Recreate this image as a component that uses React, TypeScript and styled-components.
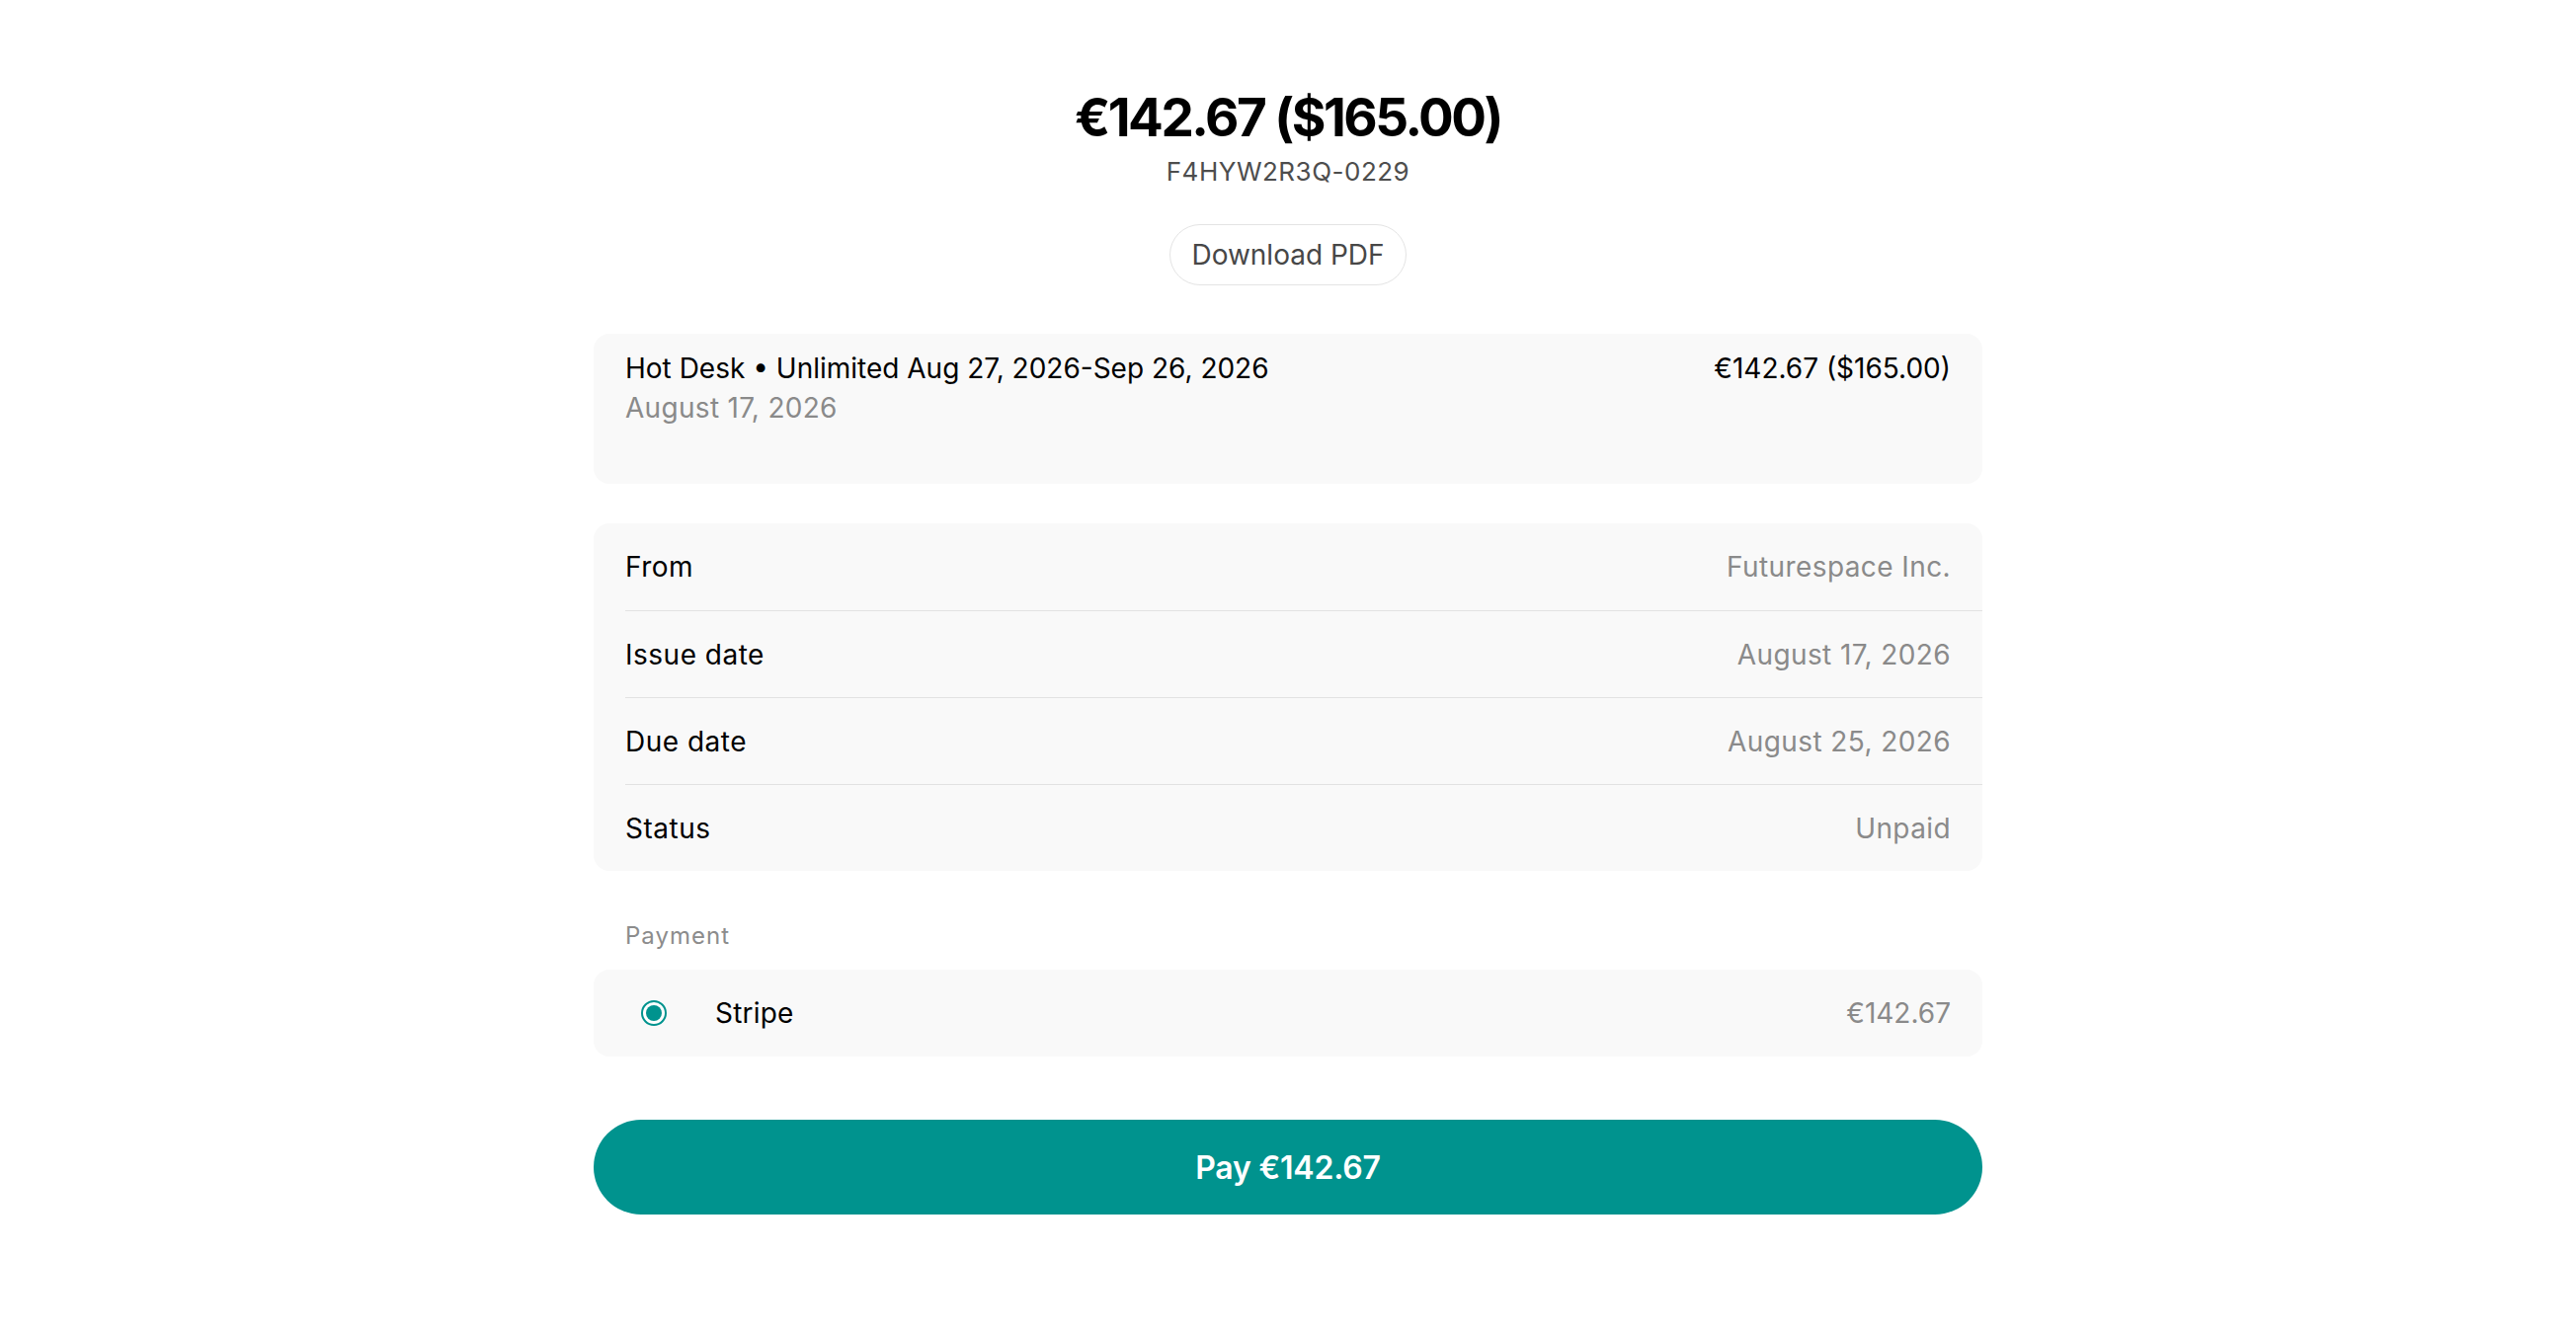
import React from "react";
import styled, { createGlobalStyle } from "styled-components";

const GlobalStyle = createGlobalStyle`
  html, body { margin: 0; padding: 0; background: #ffffff; }
  body {
    font-family: Inter, "Noto Sans", "Liberation Sans", sans-serif;
    color: #000;
    -webkit-font-smoothing: antialiased;
  }
  * { box-sizing: border-box; }
`;

const TEAL = "#00938e";

const Page = styled.main`
  width: 1406px;
  margin: 0 auto;
  padding-top: 87px;
  display: flex;
  flex-direction: column;
`;

const Header = styled.header`
  display: flex;
  flex-direction: column;
  align-items: center;
`;

const Amount = styled.h1`
  margin: 0;
  font-size: 53px;
  line-height: 64px;
  font-weight: 700;
  letter-spacing: -2.5px;
  color: #000;
`;

const InvoiceNumber = styled.div`
  margin-top: 5px;
  font-size: 26px;
  line-height: 36px;
  letter-spacing: 0.5px;
  color: #4d4d4d;
`;

const PdfButton = styled.button`
  margin-top: 35px;
  height: 62px;
  padding: 0 21px;
  border: 1px solid #e4e4e4;
  border-radius: 31px;
  background: #fff;
  font-family: inherit;
  font-size: 28px;
  color: #474747;
  display: inline-flex;
  align-items: center;
  cursor: pointer;
`;

const Card = styled.section<{ $top: number }>`
  margin-top: ${(p) => p.$top}px;
  background: #f9f9f9;
  border-radius: 16px;
`;

const LineItem = styled(Card)`
  height: 152px;
  padding: 15px 32px 0;
  display: flex;
  justify-content: space-between;
  align-items: flex-start;
`;

const ItemText = styled.div`
  display: flex;
  flex-direction: column;
`;

const Text = styled.span<{ $muted?: boolean; $spacing?: number }>`
  font-size: 28px;
  line-height: 40px;
  color: ${(p) => (p.$muted ? "#8a8a8a" : "#000")};
  letter-spacing: ${(p) => p.$spacing ?? 0}px;
  white-space: nowrap;
`;

const DetailRow = styled.div`
  height: 88px;
  margin-left: 32px;
  padding-right: 32px;
  display: flex;
  align-items: center;
  justify-content: space-between;
  & + & {
    border-top: 1px solid #e2e2e2;
  }
`;

const SectionLabel = styled.div`
  margin-top: 50px;
  padding-left: 32px;
  font-size: 24px;
  line-height: 32px;
  letter-spacing: 1px;
  color: #8c8c8c;
`;

const PaymentOption = styled(Card)`
  height: 88px;
  padding: 0 32px 0 48px;
  display: flex;
  align-items: center;
`;

const Radio = styled.span`
  width: 26px;
  height: 26px;
  border-radius: 50%;
  border: 2px solid ${TEAL};
  background: #fff;
  display: flex;
  align-items: center;
  justify-content: center;
  flex-shrink: 0;
  &::after {
    content: "";
    width: 16px;
    height: 16px;
    border-radius: 50%;
    background: ${TEAL};
  }
`;

const MethodName = styled(Text)`
  margin-left: 49px;
  flex: 1;
`;

const PayButton = styled.button`
  margin-top: 64px;
  height: 96px;
  width: 100%;
  border: none;
  border-radius: 48px;
  background: ${TEAL};
  color: #fff;
  font-family: inherit;
  font-size: 32px;
  font-weight: 600;
  letter-spacing: -0.2px;
  cursor: pointer;
`;

const details = [
  { label: "From", value: "Futurespace Inc." },
  { label: "Issue date", value: "August 17, 2026" },
  { label: "Due date", value: "August 25, 2026" },
  { label: "Status", value: "Unpaid" },
];

export default function App() {
  return (
    <>
      <GlobalStyle />
      <Page>
        <Header>
          <Amount>€142.67 ($165.00)</Amount>
          <InvoiceNumber>F4HYW2R3Q-0229</InvoiceNumber>
          <PdfButton>Download PDF</PdfButton>
        </Header>

        <LineItem $top={49}>
          <ItemText>
            <Text>Hot Desk • Unlimited Aug 27, 2026-Sep 26, 2026</Text>
            <Text $muted $spacing={0.3}>August 17, 2026</Text>
          </ItemText>
          <Text>€142.67 ($165.00)</Text>
        </LineItem>

        <Card $top={40}>
          {details.map((d) => (
            <DetailRow key={d.label}>
              <Text $spacing={0.5}>{d.label}</Text>
              <Text $muted $spacing={0.4}>{d.value}</Text>
            </DetailRow>
          ))}
        </Card>

        <SectionLabel>Payment</SectionLabel>
        <PaymentOption $top={18}>
          <Radio />
          <MethodName $spacing={0.2}>Stripe</MethodName>
          <Text $muted>€142.67</Text>
        </PaymentOption>

        <PayButton>Pay €142.67</PayButton>
      </Page>
    </>
  );
}
